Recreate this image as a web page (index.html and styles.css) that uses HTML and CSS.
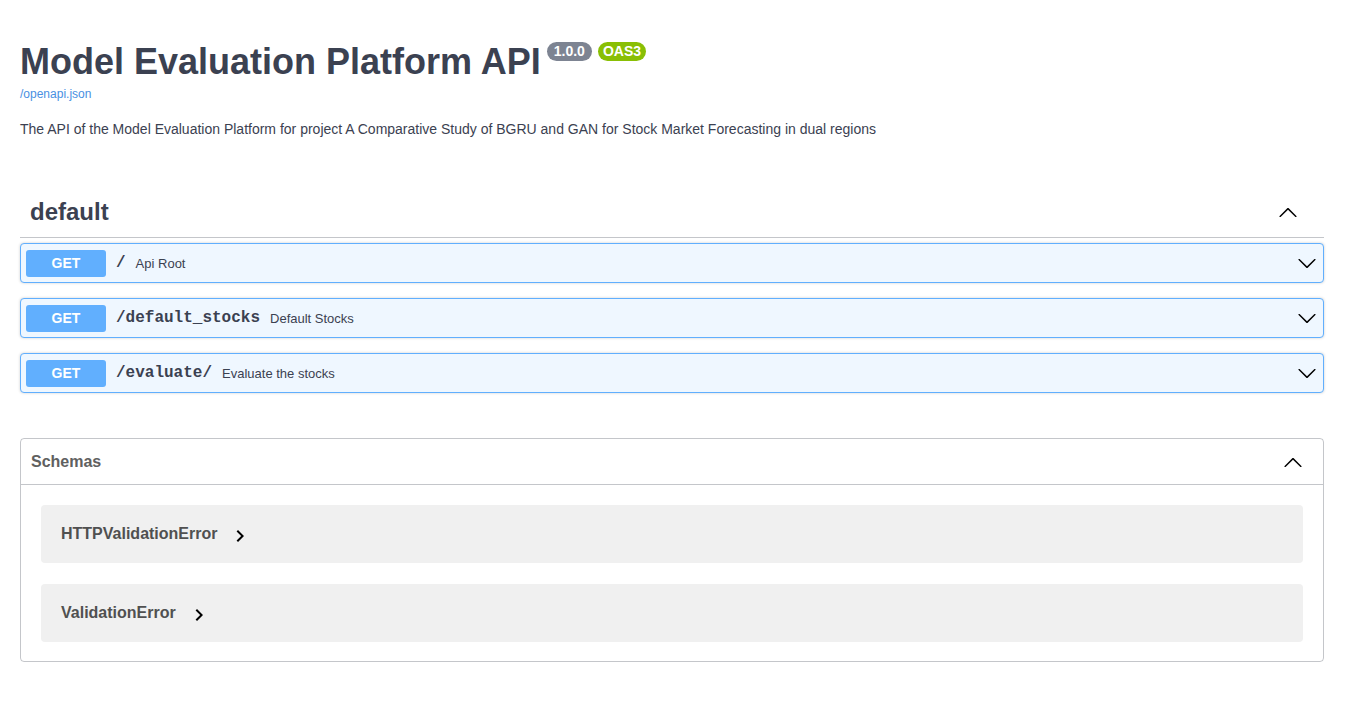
FILE: index.html
```html
<!DOCTYPE html>
<html lang="en">
<head>
<meta charset="utf-8">
<title>Model Evaluation Platform API</title>
<link rel="stylesheet" href="styles.css">
</head>
<body>
<div class="wrapper">
  <section class="info">
    <div class="title-row">
      <h2 class="title">Model Evaluation Platform API</h2>
      <span class="badge badge-version">1.0.0</span>
      <span class="badge badge-oas">OAS3</span>
    </div>
    <a class="spec-link" href="#">/openapi.json</a>
    <p class="description">The API of the Model Evaluation Platform for project A Comparative Study of BGRU and GAN for Stock Market Forecasting in dual regions</p>
  </section>

  <section class="tag-section">
    <div class="tag-header">
      <h3 class="tag-name">default</h3>
      <svg class="arrow" width="20" height="20" viewBox="0 0 20 20"><path d="M 17.418 14.908 C 17.69 15.176 18.127 15.176 18.397 14.908 C 18.667 14.64 18.668 14.207 18.397 13.939 L 10.489 6.109 C 10.219 5.841 9.782 5.841 9.51 6.109 L 1.602 13.939 C 1.332 14.207 1.332 14.64 1.602 14.908 C 1.873 15.176 2.311 15.176 2.581 14.908 L 10 7.767 L 17.418 14.908 Z"/></svg>
    </div>

    <div class="opblock">
      <span class="method">GET</span>
      <span class="path">/</span>
      <span class="summary">Api Root</span>
      <svg class="arrow" width="20" height="20" viewBox="0 0 20 20"><path d="M17.418 6.109c.272-.268.709-.268.979 0s.271.701 0 .969l-7.908 7.83c-.27.268-.707.268-.979 0l-7.908-7.830c-.27-.268-.27-.701 0-.969.271-.268.709-.268.979 0L10 13.25l7.418-7.141z"/></svg>
    </div>
    <div class="opblock">
      <span class="method">GET</span>
      <span class="path">/default_stocks</span>
      <span class="summary">Default Stocks</span>
      <svg class="arrow" width="20" height="20" viewBox="0 0 20 20"><path d="M17.418 6.109c.272-.268.709-.268.979 0s.271.701 0 .969l-7.908 7.83c-.27.268-.707.268-.979 0l-7.908-7.83c-.27-.268-.27-.701 0-.969.271-.268.709-.268.979 0L10 13.25l7.418-7.141z"/></svg>
    </div>
    <div class="opblock">
      <span class="method">GET</span>
      <span class="path">/evaluate/</span>
      <span class="summary">Evaluate the stocks</span>
      <svg class="arrow" width="20" height="20" viewBox="0 0 20 20"><path d="M17.418 6.109c.272-.268.709-.268.979 0s.271.701 0 .969l-7.908 7.83c-.27.268-.707.268-.979 0l-7.908-7.83c-.27-.268-.27-.701 0-.969.271-.268.709-.268.979 0L10 13.25l7.418-7.141z"/></svg>
    </div>
  </section>

  <section class="models">
    <div class="models-header">
      <h4 class="models-title">Schemas</h4>
      <svg class="arrow" width="20" height="20" viewBox="0 0 20 20"><path d="M 17.418 14.908 C 17.69 15.176 18.127 15.176 18.397 14.908 C 18.667 14.64 18.668 14.207 18.397 13.939 L 10.489 6.109 C 10.219 5.841 9.782 5.841 9.51 6.109 L 1.602 13.939 C 1.332 14.207 1.332 14.64 1.602 14.908 C 1.873 15.176 2.311 15.176 2.581 14.908 L 10 7.767 L 17.418 14.908 Z"/></svg>
    </div>
    <div class="models-body">
      <div class="model-container">
        <span class="model-title">HTTPValidationError</span>
        <svg class="model-toggle" width="24" height="24" viewBox="0 0 24 24"><path d="M10 6L8.59 7.41 13.17 12l-4.58 4.59L10 18l6-6z"/></svg>
      </div>
      <div class="model-container">
        <span class="model-title">ValidationError</span>
        <svg class="model-toggle" width="24" height="24" viewBox="0 0 24 24"><path d="M10 6L8.59 7.41 13.17 12l-4.58 4.59L10 18l6-6z"/></svg>
      </div>
    </div>
  </section>
</div>
</body>
</html>
```

FILE: styles.css
```css
* { box-sizing: border-box; }

body {
  margin: 0;
  background: #fff;
  font-family: "Liberation Sans", Arial, Helvetica, sans-serif;
  color: #3b4151;
}

.wrapper {
  padding: 41px 24px 40px 20px;
}

/* info */
.info {
  display: flex;
  flex-direction: column;
  align-items: flex-start;
}

.title-row {
  display: flex;
  align-items: flex-start;
}

.title {
  margin: 0;
  font-size: 36px;
  line-height: 41px;
  font-weight: 700;
  color: #3b4151;
}

.badge {
  margin: 1px 0 0 6px;
  height: 19px;
  padding: 0 7px;
  border-radius: 10px;
  color: #fff;
  font-size: 14px;
  font-weight: 700;
  line-height: 19px;
}

.badge-version { background: #7d8492; }
.badge-oas { background: #89bf04; margin-left: 6px; padding: 0 5px; }

.spec-link {
  margin-top: 5px;
  font-size: 12px;
  line-height: 14px;
  color: #4990e2;
  text-decoration: none;
}

.description {
  margin: 20px 0 0;
  font-size: 14px;
  line-height: 17px;
  color: #3b4151;
}

/* tag section */
.tag-section {
  margin-top: 48px;
}

.tag-header {
  display: flex;
  align-items: center;
  justify-content: space-between;
  padding: 0 26px 0 10px;
  height: 52px;
  border-bottom: 1px solid rgba(59, 65, 81, 0.3);
  margin-bottom: 5px;
}

.tag-name {
  margin: 0;
  font-size: 24px;
  font-weight: 700;
  color: #3b4151;
}

.arrow {
  display: block;
  flex-shrink: 0;
  fill: #000;
}

.opblock {
  display: flex;
  align-items: center;
  height: 40px;
  padding: 0 6px 0 5px;
  margin-bottom: 15px;
  border: 1px solid #61affe;
  border-radius: 4px;
  background: #eff7ff;
  box-shadow: 0 0 3px rgba(0, 0, 0, 0.19);
}

.method {
  min-width: 80px;
  height: 27px;
  line-height: 27px;
  border-radius: 3px;
  background: #61affe;
  color: #fff;
  font-size: 14px;
  font-weight: 700;
  text-align: center;
}

.path {
  padding: 0 10px;
  font-family: "Liberation Mono", "Courier New", monospace;
  font-size: 16px;
  font-weight: 700;
  color: #3b4151;
}

.summary {
  flex: 1;
  font-size: 13px;
  color: #3b4151;
}

/* models */
.models {
  margin-top: 45px;
  border: 1px solid rgba(59, 65, 81, 0.3);
  border-radius: 4px;
}

.models-header {
  display: flex;
  align-items: center;
  justify-content: space-between;
  height: 46px;
  padding: 0 20px 0 10px;
  border-bottom: 1px solid rgba(59, 65, 81, 0.3);
}

.models-title {
  margin: 0;
  font-size: 16px;
  font-weight: 700;
  color: #606060;
}

.models-body {
  display: flex;
  flex-direction: column;
  gap: 21px;
  padding: 20px 20px 19px;
}

.model-container {
  display: flex;
  align-items: center;
  height: 58px;
  padding: 0 20px;
  border-radius: 4px;
  background: #f0f0f0;
}

.model-title {
  font-size: 16px;
  font-weight: 700;
  color: #505050;
}

.model-toggle {
  display: block;
  margin: 3px 0 0 11px;
  fill: #000;
}
```
